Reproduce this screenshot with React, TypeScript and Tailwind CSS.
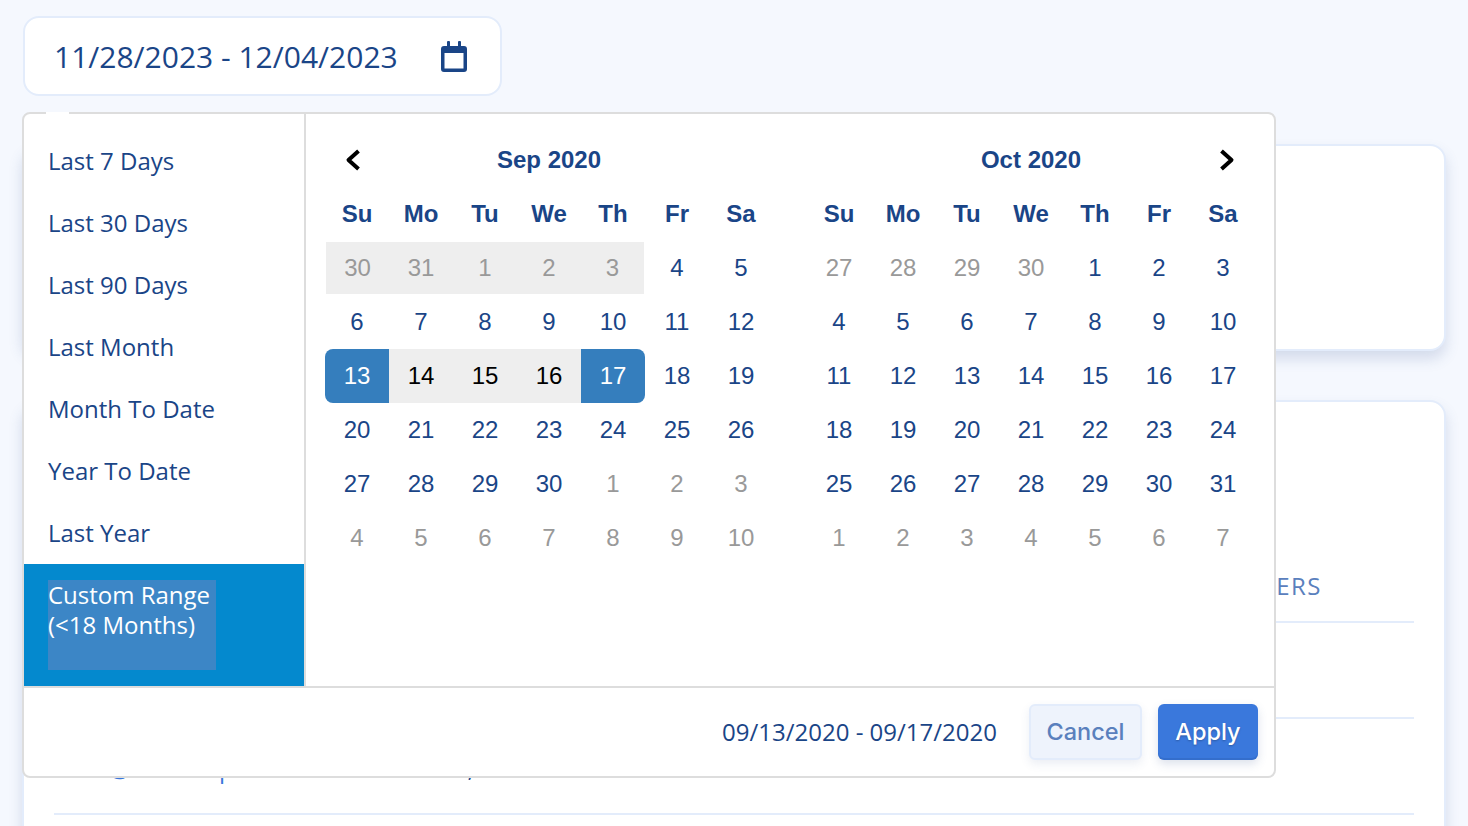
const presets = ['Last 7 Days', 'Last 30 Days', 'Last 90 Days', 'Last Month', 'Month To Date', 'Year To Date', 'Last Year'];
const weekdays = ['Su', 'Mo', 'Tu', 'We', 'Th', 'Fr', 'Sa'];

const sep = [
  [30, 31, 1, 2, 3, 4, 5],
  [6, 7, 8, 9, 10, 11, 12],
  [13, 14, 15, 16, 17, 18, 19],
  [20, 21, 22, 23, 24, 25, 26],
  [27, 28, 29, 30, 1, 2, 3],
  [4, 5, 6, 7, 8, 9, 10],
];
const oct = [
  [27, 28, 29, 30, 1, 2, 3],
  [4, 5, 6, 7, 8, 9, 10],
  [11, 12, 13, 14, 15, 16, 17],
  [18, 19, 20, 21, 22, 23, 24],
  [25, 26, 27, 28, 29, 30, 31],
  [1, 2, 3, 4, 5, 6, 7],
];

function isOff(row: number, value: number) {
  return (row === 0 && value > 20) || (row >= 4 && value < 15);
}

function celdaSep(row: number, col: number, value: number) {
  if (row === 0 && col < 5) {
    const lados = col === 0 ? 'border-l border-white' : col === 4 ? 'border-r border-white' : '';
    return `bg-[#eeeeee] text-[#999999] border-y border-white ${lados}`;
  }
  if (row === 2 && col === 0) return 'bg-[#357ebd] text-white rounded-l-lg';
  if (row === 2 && col === 4) return 'bg-[#357ebd] text-white rounded-r-lg';
  if (row === 2 && col < 4) return 'bg-[#eeeeee] text-black';
  return isOff(row, value) ? 'text-[#999999]' : 'text-[#1a4587]';
}

function celdaOct(row: number, value: number) {
  return isOff(row, value) ? 'text-[#999999]' : 'text-[#1a4587]';
}

function Chevron({ dir }: { dir: 'left' | 'right' }) {
  return (
    <svg width="15" height="22" viewBox="0 0 15 22" fill="none">
      <path
        d={dir === 'left' ? 'M13.5 2 L3.5 11 L13.5 20' : 'M1.5 2 L11.5 11 L1.5 20'}
        stroke="#000"
        strokeWidth="4"
        strokeLinejoin="round"
      />
    </svg>
  );
}

function Calendario({ titulo, semanas, nav, clase }: {
  titulo: string;
  semanas: number[][];
  nav: 'left' | 'right';
  clase: (row: number, col: number, value: number) => string;
}) {
  return (
    <div className="grid w-[448px] grid-cols-[repeat(7,64px)] auto-rows-[54px] items-stretch text-[24px] font-['Liberation_Sans',sans-serif]">
      <div className="flex items-center justify-start pl-5">{nav === 'left' && <Chevron dir="left" />}</div>
      <div className="col-span-5 flex items-center justify-center font-bold text-[#1a4587]">{titulo}</div>
      <div className="flex items-center justify-end pr-5">{nav === 'right' && <Chevron dir="right" />}</div>
      {weekdays.map((d) => (
        <div key={d} className="flex items-center justify-center font-bold text-[#1a4587]">{d}</div>
      ))}
      {semanas.map((semana, row) =>
        semana.map((value, col) => (
          <div key={`${row}-${col}`} className={`flex items-center justify-center ${clase(row, col, value)}`}>
            {value}
          </div>
        )),
      )}
    </div>
  );
}

function IconoCalendario() {
  return (
    <svg width="26" height="31" viewBox="0 0 26 31" fill="#1a4587">
      <rect x="6" y="0" width="3" height="7" rx="1" />
      <rect x="17" y="0" width="3" height="7" rx="1" />
      <path
        fillRule="evenodd"
        d="M3 5h20a3 3 0 0 1 3 3v20a3 3 0 0 1-3 3H3a3 3 0 0 1-3-3V8a3 3 0 0 1 3-3Zm.5 7v15.5h19V12h-19Z"
      />
    </svg>
  );
}

function Fila({ children }: { children: React.ReactNode }) {
  return (
    <div className="grid h-[96px] grid-cols-[339px_384px_326px_1fr] items-end border-b-2 border-[#e3ecfb] pb-[17px] leading-[36px] text-[24px]">
      {children}
    </div>
  );
}

export default function App() {
  return (
    <div className="relative h-screen overflow-hidden bg-[#f5f8fe] pl-[22px] pt-4 font-['Open_Sans',sans-serif]">
      <button
        type="button"
        className="ml-px flex h-20 w-[479px] items-center justify-between rounded-2xl border-2 border-[#e3ecfb] bg-white pl-[29px] pr-[33px] text-[30px] text-[#1a4587]"
      >
        <span>11/28/2023 - 12/04/2023</span>
        <IconoCalendario />
      </button>

      <div className="mt-12 h-[207px] w-[1424px] rounded-2xl border-2 border-[#e3ecfb] bg-white shadow-[0_8px_14px_rgba(60,90,150,0.18)]" />

      <div className="mt-[49px] h-[600px] w-[1424px] rounded-2xl border-2 border-[#e3ecfb] bg-white pl-[30px] pr-[30px] pt-[125px] shadow-[0_8px_14px_rgba(60,90,150,0.18)]">
        <Fila>
          <span />
          <span />
          <span />
          <span className="pr-[92px] text-right font-medium tracking-[1.5px] text-[#5a80bd]">USERS</span>
        </Fila>
        <Fila>
          <span />
          <span />
          <span />
          <span />
        </Fila>
        <div className="grid h-[96px] grid-cols-[339px_384px_326px_1fr] items-end border-b-2 border-[#e3ecfb] pb-[26px] text-[24px] leading-[36px] text-[#1a4587]">
          <span className="pl-[26px] text-[#3a78dc]">bo@mailshop.com</span>
          <span className="mb-px -ml-1">Mar 12, 2020</span>
          <span className="mb-px text-[#8fa6cf]">3081</span>
          <span className="mb-px text-[#8fa6cf]">00</span>
        </div>
      </div>

      <div className="absolute left-[22px] top-[112px] flex h-[666px] w-[1254px] flex-col rounded-lg border-2 border-[#dddddd] bg-white">
        <div className="absolute -top-[2px] left-[22px] h-[2px] w-[23px] bg-white" />
        <div className="flex h-[572px]">
          <div className="flex w-[282px] flex-col border-r-2 border-[#dddddd] pt-4 text-[24px] text-[#1a4587]">
            {presets.map((p) => (
              <div key={p} className="flex h-[62px] items-center px-6">{p}</div>
            ))}
            <div className="h-[122px] bg-[#0489ce] px-6 pt-4 text-white">
              <div className="h-[90px] w-[168px] bg-[#3c86c6] leading-[30px]">
                Custom Range
                <br />
                (&lt;18 Months)
              </div>
            </div>
          </div>
          <div className="flex gap-[34px] pl-[19px] pt-[19px]">
            <Calendario titulo="Sep 2020" semanas={sep} nav="left" clase={celdaSep} />
            <Calendario titulo="Oct 2020" semanas={oct} nav="right" clase={(row, _col, value) => celdaOct(row, value)} />
          </div>
        </div>
        <div className="flex flex-1 items-center justify-end gap-4 border-t-2 border-[#dddddd] pr-4 text-[24px]">
          <span className="mr-4 text-[#1a4587]">09/13/2020 - 09/17/2020</span>
          <button
            type="button"
            className="h-14 w-[113px] rounded-md border-2 border-[#e3ecfb] bg-[#eef3fc] font-['Inter',sans-serif] text-[23.5px] font-medium text-[#5a80bd] shadow-[0_4px_10px_rgba(60,90,150,0.1)]"
          >
            Cancel
          </button>
          <button
            type="button"
            className="h-14 w-[100px] rounded-md bg-[#3a78dc] font-['Inter',sans-serif] text-[23.5px] font-medium text-white shadow-[inset_0_-2px_0_rgba(30,70,140,0.2),0_4px_10px_rgba(60,90,150,0.18)] [text-shadow:0_1px_2px_rgba(0,0,0,0.25)]"
          >
            Apply
          </button>
        </div>
      </div>
    </div>
  );
}
